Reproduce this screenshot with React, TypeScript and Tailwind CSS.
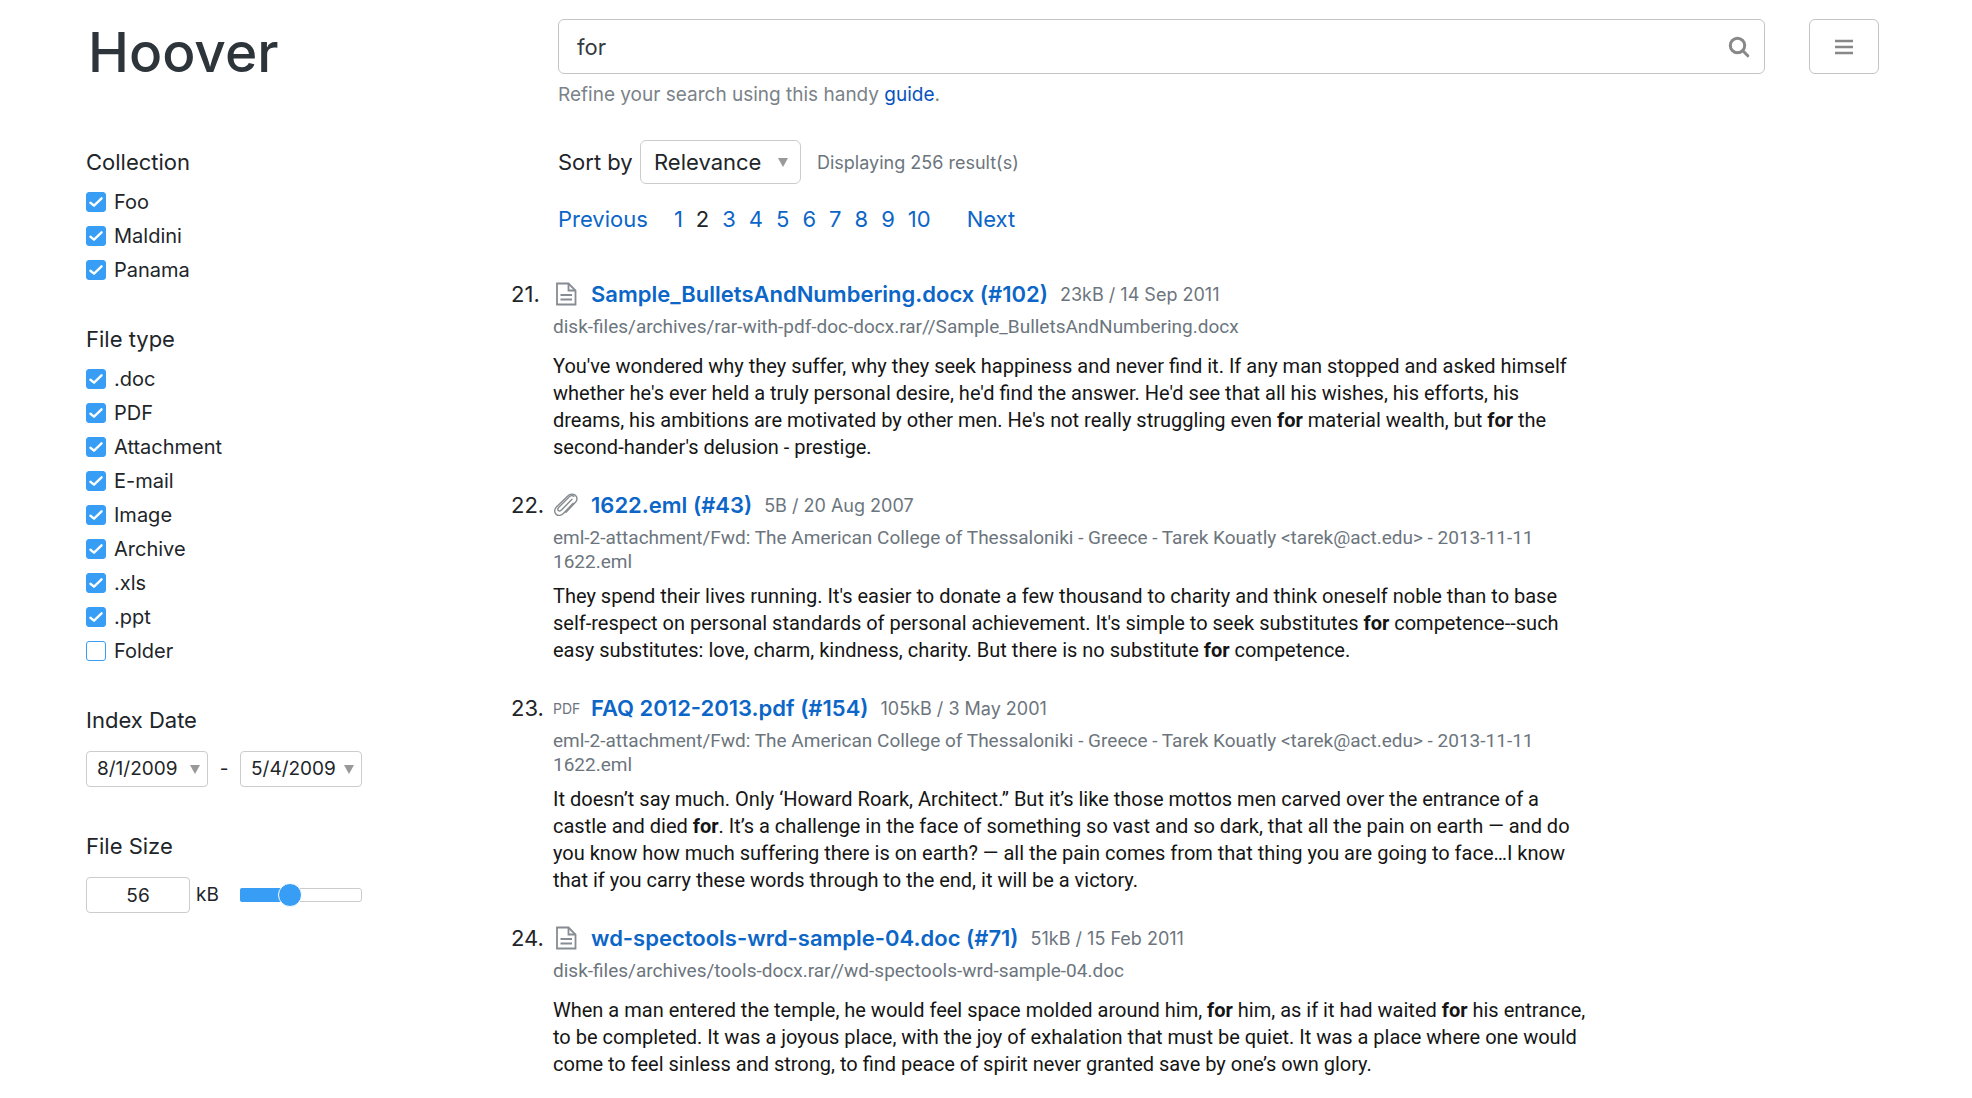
import React, { useState } from "react";

const collections = ["Foo", "Maldini", "Panama"];
const fileTypes = [".doc", "PDF", "Attachment", "E-mail", "Image", "Archive", ".xls", ".ppt", "Folder"];
const pages = [1, 2, 3, 4, 5, 6, 7, 8, 9, 10];

type Kind = "doc" | "clip" | "pdf";
type Result = { n: number; kind: Kind; title: string; meta: string; path: string[]; body: React.ReactNode[] };

const F = () => <b className="font-bold">for</b>;

const emlPath = [
  "eml-2-attachment/Fwd: The American College of Thessaloniki - Greece - Tarek Kouatly <tarek@act.edu> - 2013-11-11",
  "1622.eml",
];

const results: Result[] = [
  {
    n: 21,
    kind: "doc",
    title: "Sample_BulletsAndNumbering.docx (#102)",
    meta: "23kB / 14 Sep 2011",
    path: ["disk-files/archives/rar-with-pdf-doc-docx.rar//Sample_BulletsAndNumbering.docx"],
    body: [
      "You've wondered why they suffer, why they seek happiness and never find it. If any man stopped and asked himself",
      "whether he's ever held a truly personal desire, he'd find the answer. He'd see that all his wishes, his efforts, his",
      <>dreams, his ambitions are motivated by other men. He's not really struggling even <F /> material wealth, but <F /> the</>,
      "second-hander's delusion - prestige.",
    ],
  },
  {
    n: 22,
    kind: "clip",
    title: "1622.eml (#43)",
    meta: "5B / 20 Aug 2007",
    path: emlPath,
    body: [
      "They spend their lives running. It's easier to donate a few thousand to charity and think oneself noble than to base",
      <>self-respect on personal standards of personal achievement. It's simple to seek substitutes <F /> competence--such</>,
      <>easy substitutes: love, charm, kindness, charity. But there is no substitute <F /> competence.</>,
    ],
  },
  {
    n: 23,
    kind: "pdf",
    title: "FAQ 2012-2013.pdf (#154)",
    meta: "105kB / 3 May 2001",
    path: emlPath,
    body: [
      "It doesn’t say much. Only ‘Howard Roark, Architect.” But it’s like those mottos men carved over the entrance of a",
      <>castle and died <F />. It’s a challenge in the face of something so vast and so dark, that all the pain on earth — and do</>,
      "you know how much suffering there is on earth? — all the pain comes from that thing you are going to face…I know",
      "that if you carry these words through to the end, it will be a victory.",
    ],
  },
  {
    n: 24,
    kind: "doc",
    title: "wd-spectools-wrd-sample-04.doc (#71)",
    meta: "51kB / 15 Feb 2011",
    path: ["disk-files/archives/tools-docx.rar//wd-spectools-wrd-sample-04.doc"],
    body: [
      <>When a man entered the temple, he would feel space molded around him, <F /> him, as if it had waited <F /> his entrance,</>,
      "to be completed. It was a joyous place, with the joy of exhalation that must be quiet. It was a place where one would",
      "come to feel sinless and strong, to find peace of spirit never granted save by one’s own glory.",
    ],
  },
];

function KindIcon({ kind }: { kind: Kind }) {
  if (kind === "pdf") return <span className="text-sm text-[#6c757d]">PDF</span>;
  if (kind === "clip")
    return (
      <svg width="26" height="24" viewBox="0 0 26 24" fill="none" stroke="#868c91" strokeWidth="1.4" strokeLinecap="round" aria-hidden="true">
        <path d="M20.2 10.2 10.6 20.3c-1.900 2-5.200 3-7.400 1.100s-1.900-5.200.2-7.400L14.500 3.200c1.900-2 5.200-2.800 7.600-1.100 2.500 1.900 2.400 5.100.4 7.200L13 19.200" />
        <path d="M19 6.200 8.400 17.100c-1 1-2.300 1.200-3.100.4s-.6-2 .3-3L16.300 3.800c1.300-1.300 3.300-1.600 4.500-.5" />
      </svg>
    );
  return (
    <svg width="26" height="24" viewBox="0 0 26 24" fill="none" stroke="#868c91" strokeWidth="1.800" aria-hidden="true">
      <path d="M4 1.500h11.500L22.500 8.500v14H4z" />
      <path d="M15.500 1.500v7h7M7.500 13h11.500M7.500 17.500h11.500" />
    </svg>
  );
}

function Check({ label }: { label: string }) {
  return (
    <label className="flex h-[34px] items-center gap-2 text-xl text-[#212529]">
      <span className="relative flex size-5">
        <input
          type="checkbox"
          defaultChecked={label !== "Folder"}
          className="peer size-full appearance-none rounded-[3px] border border-[#379df5] bg-white checked:bg-[#379df5]"
        />
        <svg viewBox="0 0 19 19" fill="none" stroke="white" strokeWidth="2.200" strokeLinecap="round" strokeLinejoin="round" className="pointer-events-none absolute inset-0 hidden peer-checked:block" aria-hidden="true">
          <path d="M4.200 10.200 7.600 13 14.800 6" />
        </svg>
      </span>
      {label}
    </label>
  );
}

function Arrow({ className }: { className: string }) {
  return (
    <svg width="10" height="9" viewBox="0 0 10 9" fill="#999" className={className} aria-hidden="true">
      <path d="M0 0h10L5 9z" />
    </svg>
  );
}

function DateSelect({ value, label }: { value: string; label: string }) {
  return (
    <span className="relative flex">
      <select aria-label={label} className="h-9 w-[122px] appearance-none rounded border border-[#ccc] bg-white pl-[10px] text-[19px] text-[#212529]">
        <option>{value}</option>
      </select>
      <Arrow className="pointer-events-none absolute right-2 top-[14px]" />
    </span>
  );
}

const heading = "text-[22px] leading-7 text-[#212529]";

export default function App() {
  const [size, setSize] = useState(39);
  return (
    <div className="flex min-h-screen items-start bg-white pr-[93px] font-['Inter',sans-serif] text-[#212529]">
      <aside className="w-[511px] shrink-0 pl-[86px] pt-3">
        <h1 className="pl-[2px] text-[55px] font-medium leading-[80px] text-[#2d343a]">Hoover</h1>
        <fieldset className="mt-14">
          <legend className={heading}>Collection</legend>
          <div className="pt-[9px]">
            {collections.map((c) => <Check key={c} label={c} />)}
          </div>
        </fieldset>
        <fieldset className="mt-[38px]">
          <legend className={heading}>File type</legend>
          <div className="pt-[9px]">
            {fileTypes.map((c) => <Check key={c} label={c} />)}
          </div>
        </fieldset>
        <section className="mt-[38px]">
          <h2 className={heading}>Index Date</h2>
          <div className="mt-[17px] flex w-[276px] items-center justify-between text-[19px]">
            <DateSelect value="8/1/2009" label="From date" />
            <span>-</span>
            <DateSelect value="5/4/2009" label="To date" />
          </div>
        </section>
        <section className="mt-[45px]">
          <h2 className={heading}>File Size</h2>
          <div className="mt-[17px] flex w-[276px] items-center text-[19px]">
            <input id="kb" defaultValue="56" className="h-9 w-[104px] rounded border border-[#ccc] text-center" />
            <label htmlFor="kb" className="w-[50px] pl-[6px]">kB</label>
            <div className="relative h-[14px] w-[122px] rounded-[3px] border border-[#ccc]">
              <div className="absolute -inset-y-px -left-px rounded-l-[2px] bg-[#379df5]" style={{ width: `${size}%` }} />
              <input
                type="range"
                aria-label="File size"
                value={size}
                onChange={(e) => setSize(Number(e.target.value))}
                className="absolute inset-x-0 -inset-y-[6px] w-full appearance-none bg-transparent [&::-webkit-slider-thumb]:size-6 [&::-webkit-slider-thumb]:appearance-none [&::-webkit-slider-thumb]:rounded-full [&::-webkit-slider-thumb]:border [&::-webkit-slider-thumb]:border-white [&::-webkit-slider-thumb]:bg-[#379df5]"
              />
            </div>
          </div>
        </section>
      </aside>

      <main className="min-w-0 flex-1 pt-[19px]">
        <div className="pl-[47px]">
          <div className="flex gap-11">
            <div className="relative flex-1">
              <input aria-label="Search" defaultValue="for" className="h-[55px] w-full rounded-md border border-[#c4c4c4] pl-[18px] text-[22px] text-[#343a40]" />
              <svg width="22" height="22" viewBox="0 0 22 22" fill="none" stroke="#888" className="absolute right-[15px] top-[17px]" aria-hidden="true">
                <circle cx="9.500" cy="9.500" r="7.200" strokeWidth="3" />
                <path d="m14.800 14.800 5 5" strokeWidth="3" strokeLinecap="round" />
              </svg>
            </div>
            <button aria-label="Menu" className="flex h-[55px] w-[70px] items-center justify-center rounded-md border border-[#c4c4c4]">
              <svg width="18" height="16" viewBox="0 0 18 16" stroke="#888" strokeWidth="2.700" aria-hidden="true">
                <path d="M0 2h18M0 8h18M0 14h18" />
              </svg>
            </button>
          </div>
          <p className="mt-[9px] text-[19px] leading-6 text-[#7b8288]">
            Refine your search using this handy <a href="#guide" className="text-[#0a53be]">guide</a>.
          </p>
          <div className="mt-[33px] flex items-center">
            <label htmlFor="sort" className="w-[82px] text-[22px] whitespace-nowrap">Sort by</label>
            <span className="relative flex">
              <select id="sort" className="h-11 w-[161px] appearance-none rounded-md border border-[#ccc] bg-white pl-[13px] text-[22px]">
                <option>Relevance</option>
              </select>
              <Arrow className="pointer-events-none absolute right-[13px] top-[18px]" />
            </span>
            <span className="ml-4 text-[18px] text-[#6c757d]">Displaying 256 result(s)</span>
          </div>
          <nav className="mt-[19px] flex text-[22px] leading-8 text-[#0c66c7]">
            <a href="#prev" className="mr-[26px]">Previous</a>
            <span className="flex gap-[13px]">
              {pages.map((p) => (
                <a key={p} href={`#p${p}`} className={p === 2 ? "text-[#212529]" : ""}>{p}</a>
              ))}
            </span>
            <a href="#next" className="ml-9">Next</a>
          </nav>
        </div>

        <div className="mt-[42px] flex flex-col gap-[27px]">
          {results.map((r) => (
            <article key={r.n} className="flex">
              <span className="w-[42px] shrink-0 text-[22px] leading-[34px]">{r.n}.</span>
              <div className="whitespace-nowrap">
                <div className="flex h-[34px] items-center">
                  <span className="w-[38px]"><KindIcon kind={r.kind} /></span>
                  <a href={`#r${r.n}`} className="text-[22px] font-semibold text-[#0c66c7]">{r.title}</a>
                  <span className="ml-3 text-[18px] text-[#6c757d]">{r.meta}</span>
                </div>
                <div className="mb-[9px] mt-1 min-h-[29px] font-['Roboto',sans-serif] text-[19px] leading-6 text-[#6c757d]">
                  {r.path.map((l) => <div key={l}>{l}</div>)}
                </div>
                <div className="font-['Roboto',sans-serif] text-xl leading-[27px] text-[#151515]">
                  {r.body.map((l, i) => <div key={i}>{l}</div>)}
                </div>
              </div>
            </article>
          ))}
        </div>
      </main>
    </div>
  );
}
